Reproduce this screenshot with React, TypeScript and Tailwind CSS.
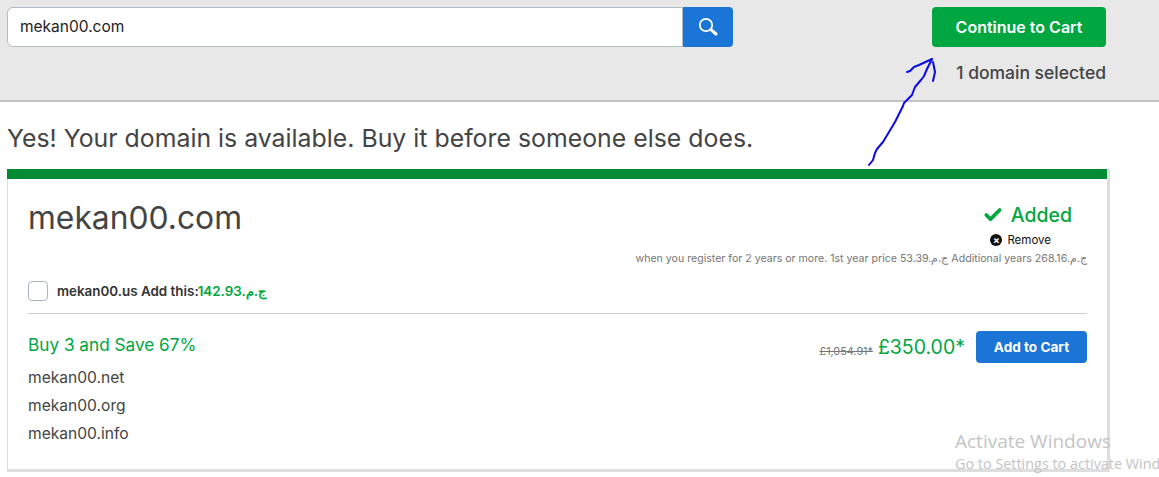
import { Check } from "lucide-react";

const bundle = ["mekan00.net", "mekan00.org", "mekan00.info"];

const App = () => {
  return (
    <div className="relative h-[477px] w-[1159px] overflow-hidden bg-white font-['Inter',sans-serif] text-[#444444]">
      <header className="flex h-[102px] items-start justify-between border-b-2 border-[#c4c4c4] bg-[#e8e8e8] pl-[7px] pr-[53px] pt-[7px]">
        <div className="flex h-[40px] w-[726px]">
          <div className="flex flex-1 items-center rounded-l-[6px] border border-[#b4bcc4] bg-white pl-3 text-[15.5px] text-[#222222]">
            mekan00.com
          </div>
          <button className="flex w-[50px] items-center justify-center rounded-r-[4px] bg-[#1b75d6] text-white">
            <svg width="20" height="20" viewBox="0 0 20 20" fill="none" stroke="currentColor" strokeLinecap="round">
              <circle cx="8" cy="8" r="6.2" strokeWidth="1.8" />
              <path d="M13 12.6 L18 17" strokeWidth="3" />
            </svg>
          </button>
        </div>

        <div className="flex flex-col items-end">
          <button className="h-[40px] w-[174px] rounded-[4px] bg-[#00a63f] text-[16px] font-semibold text-white">
            Continue to Cart
          </button>
          <p className="mt-[16px] text-[17.5px] font-medium leading-5 text-[#444444]">
            1 domain selected
          </p>
        </div>
      </header>

      <main className="pl-[7px]">
        <h1 className="mt-[20px] text-[24.85px] leading-[32px] text-[#444444]">
          Yes! Your domain is available. Buy it before someone else does.
        </h1>

        <section className="mt-[15px] h-[303px] w-[1103px] border-b-[3px] border-l border-r-[3px] border-[#dedede] border-t-0">
          <div className="-ml-px h-[10px] bg-[#008c35]" />

          <div className="pl-[20px] pr-[20px]">
            <div className="flex items-start justify-between">
              <h2 className="mt-[21px] text-[31.8px] leading-[36px]">mekan00.com</h2>

              <div className="flex flex-col items-end">
                <div className="mt-[24px] flex items-center gap-[8px] pr-[15px] text-[#00a63f]">
                  <Check size={20} strokeWidth={4.5} />
                  <span className="text-[19.5px] font-medium leading-6">Added</span>
                </div>
                <div className="mt-[5px] flex items-center gap-[5px] pr-[36px] text-[11.5px] leading-4 text-[#111111]">
                  <span className="flex h-3 w-3 items-center justify-center rounded-full bg-[#111111] text-[10px] font-bold leading-none text-white">
                    ×
                  </span>
                  Remove
                </div>
                <p className="mt-[4px] text-[10.6px] leading-[14px] text-[#767676]">
                  when you register for 2 years or more. 1st year price 53.39.ج.م Additional years 268.16.ج.م
                </p>
              </div>
            </div>

            <div className="mt-[15px] flex items-center gap-[9px] border-b border-[#d0d0d0] pb-[12px]">
              <span className="h-[20px] w-[20px] rounded-[4px] border border-[#aab4bc] bg-white" />
              <span className="text-[13.4px] font-semibold text-[#333333]">
                mekan00.us Add this:
                <span className="-ml-[1px] text-[#00a63f]">142.93.ج.م</span>
              </span>
            </div>

            <div className="flex items-start justify-between">
              <div>
                <p className="mt-[19px] text-[17.2px] leading-[24px] text-[#00a63f]">Buy 3 and Save 67%</p>
                <ul className="mt-[10px] flex flex-col gap-[6px] text-[15.6px] leading-[22px]">
                  {bundle.map((name) => (
                    <li key={name}>{name}</li>
                  ))}
                </ul>
              </div>

              <div className="mt-[17px] flex items-center">
                <span className="mt-[9px] text-[10.8px] text-[#767676] line-through">£1,054.91*</span>
                <span className="ml-[5px] text-[19.5px] leading-7 text-[#00a63f]">£350.00*</span>
                <button className="ml-[11px] h-[32px] w-[111px] rounded-[4px] bg-[#1b75d6] text-[13.6px] font-bold text-white">
                  Add to Cart
                </button>
              </div>
            </div>
          </div>
        </section>
      </main>

      {/* hand-drawn arrow on top of the screenshot */}
      <svg className="absolute left-0 top-0" width="1159" height="477" fill="none" stroke="#0a0ae6" strokeWidth="2" strokeLinecap="round" strokeLinejoin="round">
        <path d="M869 165 L873 160 L875 153 L877 149 L883 142 L895 122 L903 106 L904 103 L912 95 L915 87 L921 80 L924 76 L927 69 L932 59" />
        <path d="M907 72 L910 71 L914 67 L919 65 L932 59" />
        <path d="M933 62 L935 72 L933 81" />
      </svg>

      <div className="pointer-events-none absolute left-[955px] top-[429px] whitespace-nowrap font-['Open_Sans',sans-serif] text-[#c4c4c4]">
        <p className="text-[19px] leading-[24px]">Activate Windows</p>
        <p className="mt-px text-[14.4px] leading-[20px]">Go to Settings to activate Windows.</p>
      </div>
    </div>
  );
};

export default App;
